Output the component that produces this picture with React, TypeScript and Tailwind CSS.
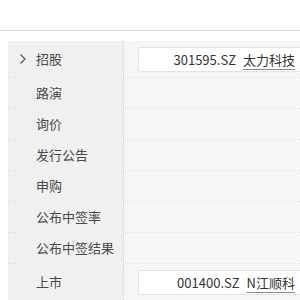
const rows = [
  { label: "招股", open: true, code: "301595.SZ", name: "太力科技" },
  { label: "路演" },
  { label: "询价" },
  { label: "发行公告" },
  { label: "申购" },
  { label: "公布中签率" },
  { label: "公布中签结果" },
  { label: "上市", code: "001400.SZ", name: "N江顺科" },
];

type Row = { label: string; open?: boolean; code?: string; name?: string };

function StageRow({ row }: { row: Row }) {
  const tall = !!row.code;
  return (
    <div
      className={
        "flex border-b border-dotted border-[#dcdcdc] " +
        (tall ? "h-[37px]" : "h-[31px]")
      }
    >
      <div className="relative flex w-[116px] shrink-0 items-center border-r border-dotted border-[#d6d6d6] bg-[#f0f0f0] pl-[28px] text-[13px] text-[#484848]">
        {row.open && (
          <svg
            className="absolute left-[11px] top-1/2 -translate-y-1/2"
            width="8"
            height="11"
            viewBox="0 0 8 11"
            fill="none"
          >
            <path d="M1.5 1 L6 5.5 L1.5 10" stroke="#555" strokeWidth="1.2" />
          </svg>
        )}
        {row.label}
      </div>
      <div className="flex flex-1 items-start bg-[#f6f6f6] pl-[14px] pt-[6px]">
        {row.code && (
          <div className="flex h-[25px] w-[175px] shrink-0 items-center justify-end rounded-[2px] border border-[#e4e4e4] bg-white pr-[17px] text-[13px] text-[#333]">
            <span>{row.code}</span>
            <span className="ml-[7px] underline decoration-[#888] underline-offset-[4px]">
              {row.name}
            </span>
          </div>
        )}
      </div>
    </div>
  );
}

export default function App() {
  return (
    <div
      className="h-[300px] w-[300px] overflow-hidden bg-white"
      style={{ fontFamily: '"Noto Sans CJK SC", "Noto Sans", sans-serif' }}
    >
      <div className="h-[31px] border-b border-[#dadada]" />
      <div className="pl-2 pt-[10px]">
        <div className="w-[320px]">
          {rows.map((r) => (
            <StageRow key={r.label} row={r} />
          ))}
        </div>
      </div>
    </div>
  );
}
